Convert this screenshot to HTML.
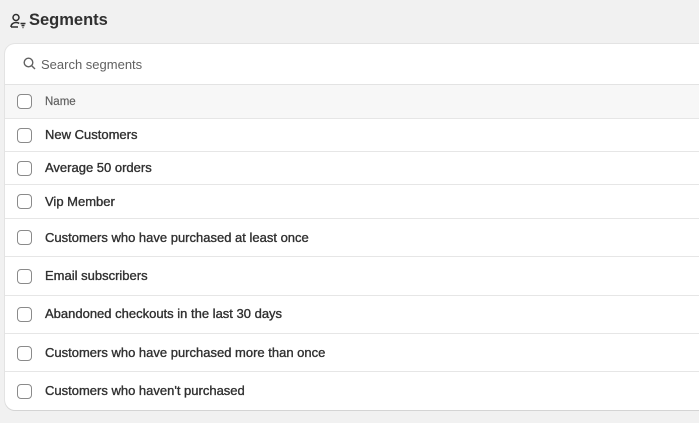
<!DOCTYPE html><html><head><style>
body{margin:0;width:699px;height:423px;background:#f1f1f1;font-family:"Liberation Sans",sans-serif;overflow:hidden;position:relative}
.t{position:absolute;left:29px;top:11px;font-size:16.5px;font-weight:bold;color:#303030}
.ic{position:absolute;left:10px;top:13px}
.card{position:absolute;left:5px;top:44px;width:720px;height:366px;background:#fff;border-radius:10px;box-shadow:0 1px 0 #d4d4d4,0 0 0 1px #e3e3e3;overflow:hidden}
.s{height:40px;border-bottom:1px solid #e3e3e3;position:relative;font-size:13px;color:#616161}
.s span{position:absolute;left:36px;top:13px}
.r{position:relative;border-bottom:1px solid #e6e6e6;font-size:13px;color:#303030;-webkit-text-stroke:0.35px #303030}
.r .cb{position:absolute;left:12px;width:13px;height:13px;border:1px solid #8a8a8a;border-radius:4px;background:#fff;-webkit-text-stroke:0}
.r span{position:absolute;left:40px}
.h{background:#f7f7f7;color:#616161;font-size:11.5px;-webkit-text-stroke:0.2px #616161}
</style></head><body>
<svg class="ic" width="17" height="16" viewBox="0 0 17 16" fill="none" stroke="#303030" stroke-width="1.5"><circle cx="6" cy="4.5" r="3"/><path d="M1 14c0-3 2.5-4.5 5-4.5 1.5 0 2.5.4 3.2 1M1 14h7"/><path d="M10.5 10.5h5M11.5 12.5h3M12.5 14.5h1"/></svg>
<div class="t">Segments</div>
<div class="card">
<div class="s"><svg style="position:absolute;left:18px;top:13px" width="13" height="13" viewBox="0 0 13 13" fill="none" stroke="#616161" stroke-width="1.4"><circle cx="5.5" cy="5.5" r="4.3"/><path d="M8.7 8.7l3.3 3.3"/></svg><span>Search segments</span></div>
<div class="r h" style="height:33px"><div class="cb" style="top:9px"></div><span style="top:11px">Name</span></div>
<div class="r" style="height:32px"><div class="cb" style="top:9px"></div><span style="top:8px">New Customers</span></div>
<div class="r" style="height:32px"><div class="cb" style="top:9px"></div><span style="top:8px">Average 50 orders</span></div>
<div class="r" style="height:33px"><div class="cb" style="top:9px"></div><span style="top:9px">Vip Member</span></div>
<div class="r" style="height:37px"><div class="cb" style="top:11px"></div><span style="top:11px">Customers who have purchased at least once</span></div>
<div class="r" style="height:38px"><div class="cb" style="top:12px"></div><span style="top:11px">Email subscribers</span></div>
<div class="r" style="height:37px"><div class="cb" style="top:11px"></div><span style="top:10px">Abandoned checkouts in the last 30 days</span></div>
<div class="r" style="height:37px"><div class="cb" style="top:12px"></div><span style="top:11px">Customers who have purchased more than once</span></div>
<div class="r" style="height:38px;border:none"><div class="cb" style="top:12px"></div><span style="top:11px">Customers who haven't purchased</span></div>
</div>
</body></html>
